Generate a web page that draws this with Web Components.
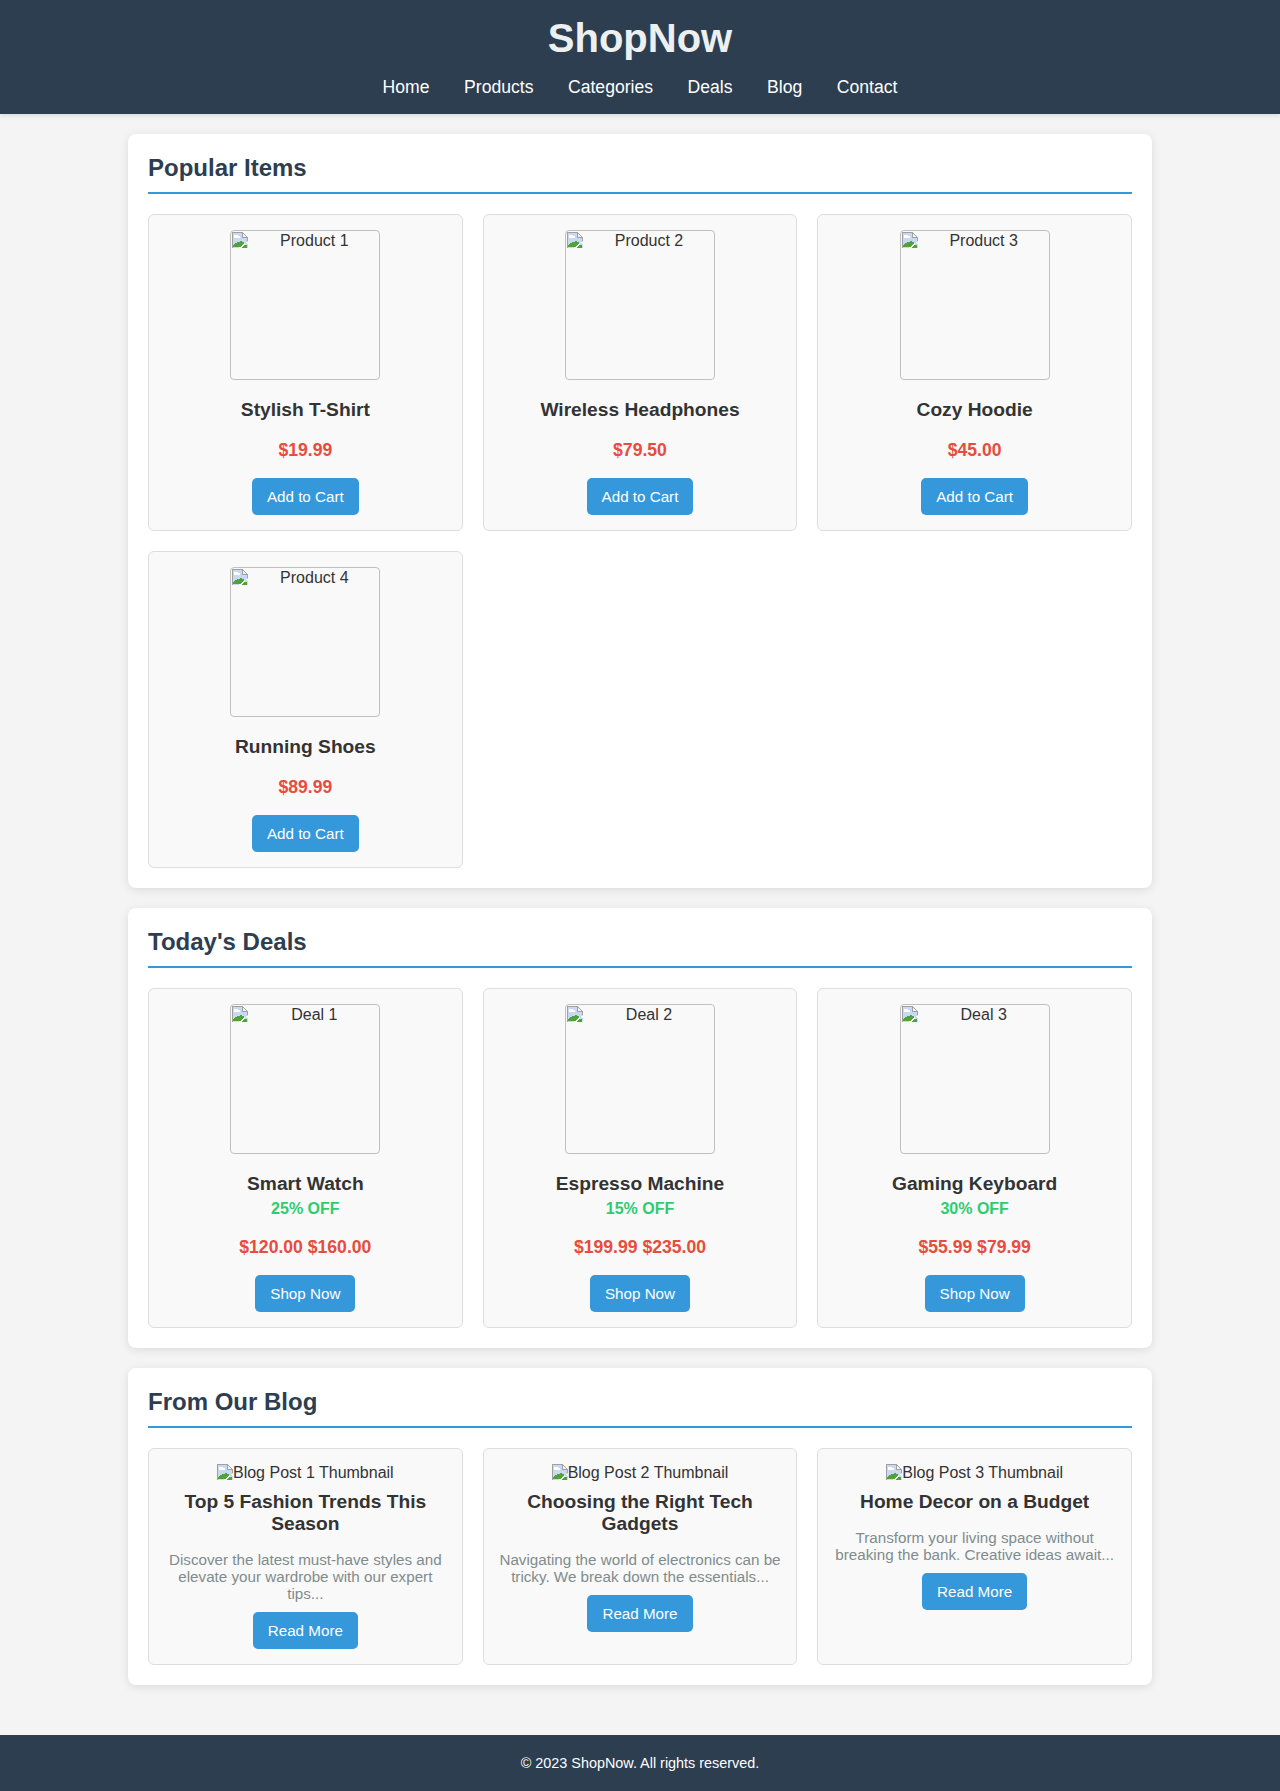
<!DOCTYPE html>
<html lang="en"><head><meta charset="utf-8"><title>ShopNow</title>
<style>
html,body{margin:0;padding:0}
body{font-family:"Liberation Sans",Arial,sans-serif;background:#f4f4f4;color:#333;font-size:16px}
</style></head><body>
<shop-page></shop-page>
<script>
const ICON=`<svg width="16" height="16" viewBox="0 0 16 16" aria-hidden="true" style="display:block" shape-rendering="crispEdges"><path d="M0 0H10.500L16 5.500V16H0Z" fill="#c9d8f3"/><path d="M.5 15.500V.5H10.300L15.500 5.700V9" fill="none" stroke="#a0a0a0"/><path d="M10.500 1V5.500H15" fill="#f4f4f4" stroke="#a0a0a0"/><path d="M2 3H6V4H8V6H2Z" fill="#fff"/><path d="M1 15V13H2V12H3V11H5V10H8V9H10V10H12V11L8 15Z" fill="#4ea339"/><path d="M12 11H13V12L9 16H7V15H8Z" fill="#fff"/><path d="M13 13H15V16H10V15Z" fill="#4ea339"/><path d="M14 10H16V12H15Z" fill="#fff"/></svg>`;
class Base extends HTMLElement{
 connectedCallback(){if(!this.shadowRoot){this.attachShadow({mode:'open'});this.shadowRoot.innerHTML=this.markup()}}
}
customElements.define('shop-header',class extends Base{markup(){return `<style>
:host{display:block;background:#2c3e50;color:#fff;box-shadow:0 2px 4px rgba(0,0,0,.1);padding:15px 0 11px;text-align:center}
h1{margin:0 0 10px;font-size:40px;line-height:46px;color:#ecf0f1;font-weight:700}
nav{display:flex;justify-content:center;gap:34.500px;height:32px;align-items:center;font-size:17.600px}
a{color:#fff;text-decoration:none}
</style><h1>ShopNow</h1><nav>${['Home','Products','Categories','Deals','Blog','Contact'].map(t=>`<a href="#">${t}</a>`).join('')}</nav>`}});
customElements.define('shop-section',class extends Base{markup(){return `<style>
:host{display:block;background:#fff;border-radius:8px;box-shadow:0 2px 10px rgba(0,0,0,.1);padding:20px;margin-bottom:20px}
h2{margin:0 0 20px;font-size:24px;line-height:28px;padding-bottom:10px;border-bottom:2px solid #3498db;color:#2c3e50}
.g{display:grid;grid-template-columns:repeat(3,1fr);gap:20px}
</style><h2>${this.getAttribute('heading')}</h2><div class="g"><slot></slot></div>`}});
customElements.define('broken-img',class extends Base{markup(){const a=this.getAttribute('alt');
 if(this.hasAttribute('inline'))return `<style>:host{display:inline-block;vertical-align:baseline}.i{display:inline-block;vertical-align:-2px}</style><span class="i">${ICON}</span>${a}`;
 return `<style>:host{display:inline-block;vertical-align:baseline;width:150px;height:150px;box-sizing:border-box;border:1px solid #c0c0c0;border-radius:4px;overflow:hidden;position:relative;text-align:center;line-height:18px}
 .i{position:absolute;left:1px;top:1px}.t{padding-left:18px;padding-top:1px}</style><span class="i">${ICON}</span><div class="t">${a}</div>`}});
customElements.define('shop-card',class extends Base{markup(){
 const g=n=>this.getAttribute(n),blog=this.hasAttribute('blog');
 return `<style>
:host{display:block;background:#f9f9f9;border:1px solid #ddd;border-radius:6px;padding:15px;text-align:center;box-sizing:border-box;min-width:0}
h3{margin:${blog?'9.500px 0 16px':(g('off')?'15px 0 0':'15px 0 19.200px')};font-size:19.200px;line-height:22px;color:#333}
.o{font-weight:700;color:#2ecc71;line-height:18px;margin:5.500px 0 0}
.p{font-weight:700;font-size:17.600px;line-height:20px;color:#e74c3c;margin:${g('off')?'19px':'0'} 0 17.600px}
.d{font-size:15.200px;line-height:17px;color:#7f8c8d;margin:0 0 9.400px}
a{display:inline-block;background:#3498db;color:#fff;text-decoration:none;font-size:15.200px;line-height:17px;padding:10px 15px;border-radius:5px}
.w{line-height:18px}
</style><div class="w"><broken-img alt="${g('alt')}" ${blog?'inline':''}></broken-img></div>
<h3>${g('name')}</h3>
${g('off')?`<div class="o">${g('off')}</div>`:''}
${g('price')?`<div class="p">${g('price')}</div>`:''}
${g('desc')?`<div class="d">${g('desc')}</div>`:''}
<a href="#">${g('cta')}</a>`}});
customElements.define('shop-footer',class extends Base{markup(){return `<style>
:host{display:block;background:#2c3e50;color:#fff;text-align:center;font-size:14.400px;padding:20px;margin-top:50.400px;line-height:16px}
</style>© 2023 ShopNow. All rights reserved.`}});
customElements.define('shop-page',class extends Base{markup(){
 const esc=s=>s.replace(/"/g,'&quot;');
 const prod=[['Product 1','Stylish T-Shirt','$19.99'],['Product 2','Wireless Headphones','$79.50'],['Product 3','Cozy Hoodie','$45.00'],['Product 4','Running Shoes','$89.99']];
 const deals=[['Deal 1','Smart Watch','25% OFF','$120.00 $160.00'],['Deal 2','Espresso Machine','15% OFF','$199.99 $235.00'],['Deal 3','Gaming Keyboard','30% OFF','$55.99 $79.99']];
 const blog=[['Blog Post 1 Thumbnail','Top 5 Fashion Trends This Season','Discover the latest must-have styles and elevate your wardrobe with our expert tips...'],['Blog Post 2 Thumbnail','Choosing the Right Tech Gadgets','Navigating the world of electronics can be tricky. We break down the essentials...'],['Blog Post 3 Thumbnail','Home Decor on a Budget','Transform your living space without breaking the bank. Creative ideas await...']];
 return `<style>:host{display:block}main{width:1024px;margin:20px auto 0}</style>
<shop-header></shop-header><main>
<shop-section heading="Popular Items">${prod.map(p=>`<shop-card alt="${p[0]}" name="${p[1]}" price="${p[2]}" cta="Add to Cart"></shop-card>`).join('')}</shop-section>
<shop-section heading="Today's Deals">${deals.map(p=>`<shop-card alt="${p[0]}" name="${p[1]}" off="${p[2]}" price="${p[3]}" cta="Shop Now"></shop-card>`).join('')}</shop-section>
<shop-section heading="From Our Blog">${blog.map(p=>`<shop-card blog alt="${p[0]}" name="${esc(p[1])}" desc="${esc(p[2])}" cta="Read More"></shop-card>`).join('')}</shop-section>
</main><shop-footer></shop-footer>`}});
</script></body></html>
